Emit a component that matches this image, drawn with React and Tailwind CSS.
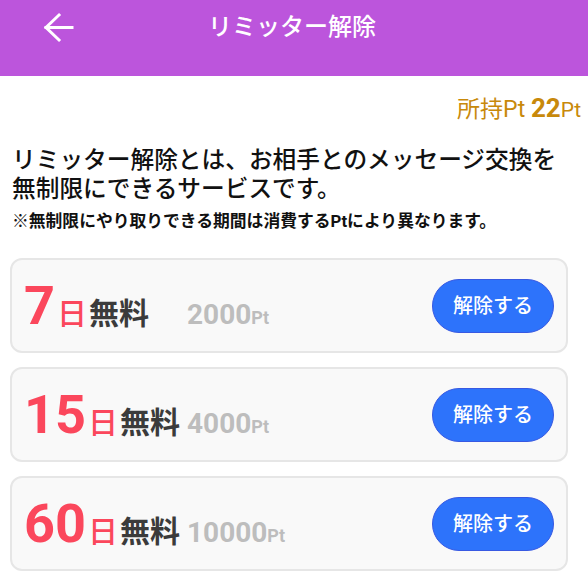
import React from "react";

const plans = [
  { days: "7", price: "2000" },
  { days: "15", price: "4000" },
  { days: "60", price: "10000" },
];

function Card({ days, price }) {
  return (
    <div className="flex h-[95px] items-center justify-between rounded-[12px] border-2 border-[#e6e6e6] bg-[#f9f9f9] pl-[12px] pr-[12px]">
      <div className="flex items-baseline">
        <div className="flex w-[163px] shrink-0 items-baseline">
          <span className="text-[54px] font-bold leading-none text-[#fb475c]">{days}</span>
          <span className="ml-[2px] text-[30px] font-medium leading-none text-[#fb475c]">日</span>
          <span className="ml-[2px] text-[30px] font-bold leading-none text-[#3b3b3b]">無料</span>
        </div>
        <span className="text-[28px] font-bold leading-none text-[#bdbdbd]">{price}</span>
        <span className="text-[18px] font-bold leading-none text-[#bdbdbd]">Pt</span>
      </div>
      <button className="flex h-[54px] w-[122px] items-center justify-center rounded-full border-[1.5px] border-[#3859e2] bg-[#2d73fb] text-[20px] font-medium text-white">
        解除する
      </button>
    </div>
  );
}

export default function App() {
  return (
    <div
      className="min-h-[578px] w-[588px] bg-white"
      style={{ fontFamily: "Roboto, 'Noto Sans CJK JP', sans-serif" }}
    >
      <header className="h-[76px] bg-[#bc55dc]">
        <div className="relative flex h-[54px] items-center justify-center">
          <svg
            className="absolute left-[43px] top-[12px]"
            width="31"
            height="31"
            viewBox="0 0 31 31"
            fill="none"
            stroke="white"
            strokeWidth="3"
            strokeLinecap="square"
          >
            <path d="M3 15.5 H29" />
            <path d="M16 3 L3 15.5 L16 28" />
          </svg>
          <h1 className="pr-[4px] text-[24px] font-medium text-white">リミッター解除</h1>
        </div>
      </header>

      <div className="pr-[7px] pt-[18px] text-right leading-[28px] text-[#c8890b]">
        <span className="text-[23px]">所持Pt </span>
        <span className="text-[26px] font-bold">22</span>
        <span className="text-[21px]">Pt</span>
      </div>

      <p className="mt-[20px] pl-[12px] text-[23.7px] font-medium leading-[29px] text-[#111]">
        リミッター解除とは、お相手とのメッセージ交換を
        <br />
        無制限にできるサービスです。
      </p>
      <p className="mt-[7px] pl-[12px] text-[16.8px] font-bold leading-[20px] text-[#111]">
        ※無制限にやり取りできる期間は消費するPtにより異なります。
      </p>

      <div className="ml-[10px] mr-[20px] mt-[27px] flex flex-col gap-[14px]">
        {plans.map((p) => (
          <Card key={p.days} {...p} />
        ))}
      </div>
    </div>
  );
}
